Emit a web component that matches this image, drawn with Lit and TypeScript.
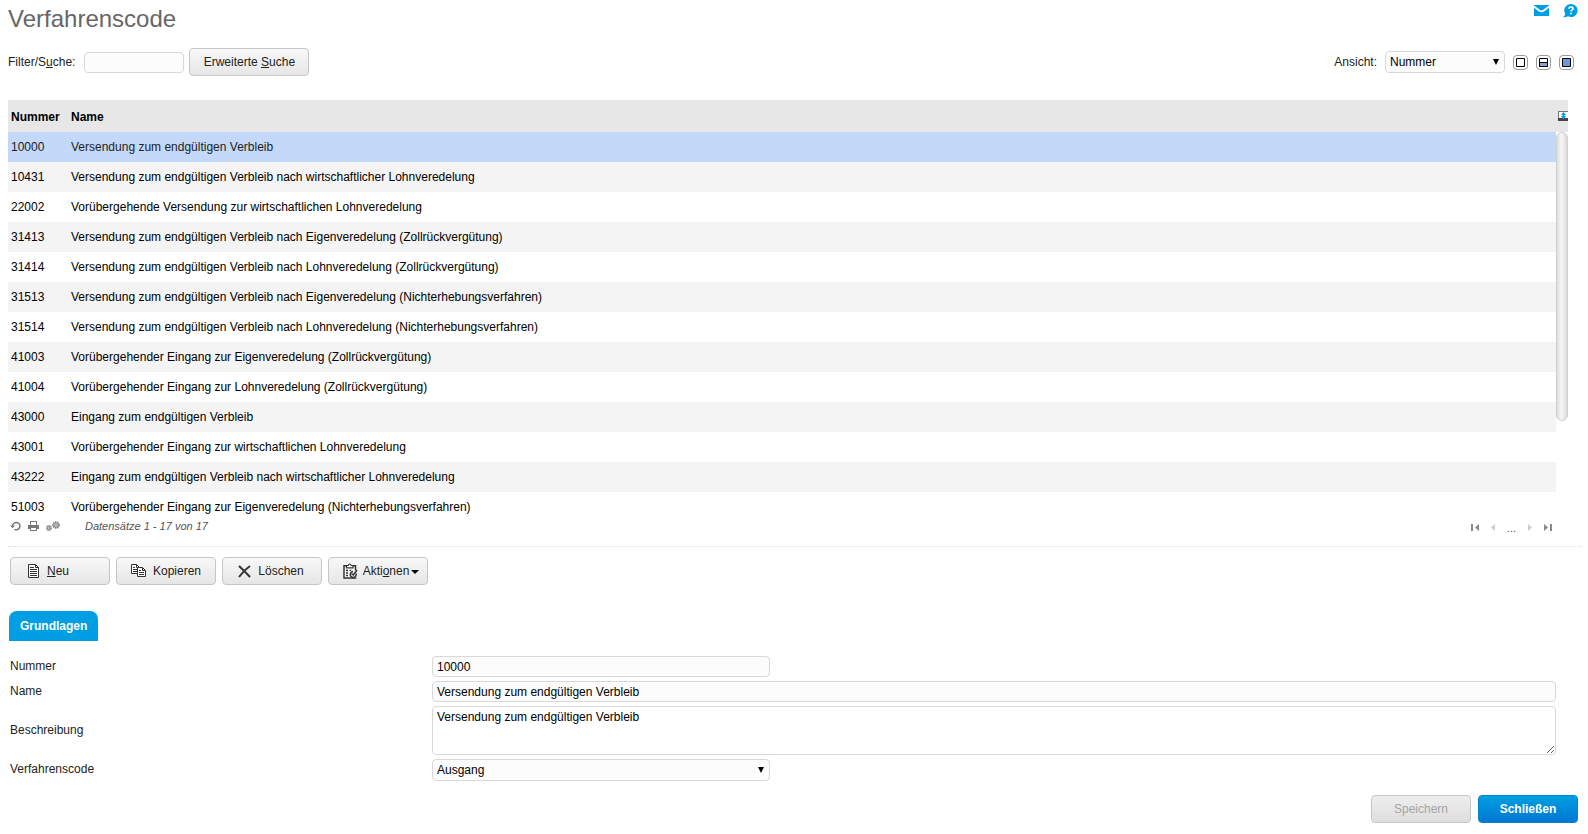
import { LitElement, html, css, svg } from "lit";
import { customElement, state } from "lit/decorators.js";
import { classMap } from "lit/directives/class-map.js";

interface Entry {
  nummer: string;
  name: string;
}

const ENTRIES: Entry[] = [
  { nummer: "10000", name: "Versendung zum endgültigen Verbleib" },
  { nummer: "10431", name: "Versendung zum endgültigen Verbleib nach wirtschaftlicher Lohnveredelung" },
  { nummer: "22002", name: "Vorübergehende Versendung zur wirtschaftlichen Lohnveredelung" },
  { nummer: "31413", name: "Versendung zum endgültigen Verbleib nach Eigenveredelung (Zollrückvergütung)" },
  { nummer: "31414", name: "Versendung zum endgültigen Verbleib nach Lohnveredelung (Zollrückvergütung)" },
  { nummer: "31513", name: "Versendung zum endgültigen Verbleib nach Eigenveredelung (Nichterhebungsverfahren)" },
  { nummer: "31514", name: "Versendung zum endgültigen Verbleib nach Lohnveredelung (Nichterhebungsverfahren)" },
  { nummer: "41003", name: "Vorübergehender Eingang zur Eigenveredelung (Zollrückvergütung)" },
  { nummer: "41004", name: "Vorübergehender Eingang zur Lohnveredelung (Zollrückvergütung)" },
  { nummer: "43000", name: "Eingang zum endgültigen Verbleib" },
  { nummer: "43001", name: "Vorübergehender Eingang zur wirtschaftlichen Lohnveredelung" },
  { nummer: "43222", name: "Eingang zum endgültigen Verbleib nach wirtschaftlicher Lohnveredelung" },
  { nummer: "51003", name: "Vorübergehender Eingang zur Eigenveredelung (Nichterhebungsverfahren)" },
];

const icon = (w: number, h: number, body: unknown) => html`<svg
  width=${w}
  height=${h}
  viewBox="0 0 ${w} ${h}"
  aria-hidden="true"
>${body}</svg>`;

const mailIcon = icon(15, 12, svg`<path fill="#009fe3" d="M0 1h15v11H0z"/><path fill="none" stroke="#fff" stroke-width="1.800" d="M0 2.500l5.500 4.200q2 1.300 4 0L15 2.500"/>`);
const helpIcon = icon(15, 14, svg`<path fill="#009fe3" d="M8.300 0a6.500 6.500 0 1 1-3.300 12.200Q3 13.500 0 13.300q2-1.300 2.200-3.500A6.500 6.500 0 0 1 8.300 0z"/><path fill="none" stroke="#fff" stroke-width="1.700" d="M6 4.800q0-1.800 2-1.800t2 1.600q0 1-1.200 1.600-.8.400-.8 1.400M8 8.700v1.600"/>`);
const viewListIcon = icon(9, 9, svg`<path fill="#fff" stroke="#000" d="M.5.5h8v8h-8z"/>`);
const viewSplitIcon = icon(9, 9, svg`<path fill="#fff" stroke="#000" d="M.5.5h8v8h-8z"/><path fill="#8ea2d2" stroke="#000" d="M.5 4.500h8v4h-8z"/>`);
const viewFormIcon = icon(9, 9, svg`<path fill="#6a9bd8" stroke="#000" d="M.5.5h8v8h-8z"/>`);
const columnsIcon = icon(10, 10, svg`<path fill="#fff" d="M0 0h10v10H0z"/><path fill="#777" d="M0 0h10v1H0zM0 0h1v10H0z"/><path fill="#444" d="M0 7h10v3H0z"/><path fill="#009fe3" d="M5.500 1L8 4H6.500v1H8L5.500 8.500 3 5h1.500V4H3z"/>`);
const refreshIcon = icon(11, 10, svg`<path fill="none" stroke="#777" stroke-width="1.500" d="M2.500 5a3.700 3.700 0 1 1 2 3.400"/><path fill="#777" d="M0 4.500h5L2.500 7.300z"/>`);
const printIcon = icon(11, 10, svg`<path fill="#777" d="M2 0h7v4H2zM0 4h11v4H0z"/><path fill="#fff" d="M3 1h5v3H3z"/><path fill="#777" d="M2 6h7v4H2z"/><path fill="#fff" d="M3 7h5v2H3z"/>`);
const gearsIcon = icon(14, 10, svg`<g fill="#bbb" stroke="#888"><circle cx="3" cy="7" r="2" stroke-width="2" stroke-dasharray="1.200 .4"/><circle cx="10" cy="4" r="2.700" stroke-width="2.200" stroke-dasharray="1.400 .5"/></g>`);
const firstIcon = icon(8, 8, svg`<path fill="#888" d="M0 0h2v7H0zM8 0v7L4 3.500z"/>`);
const lastIcon = icon(8, 8, svg`<path fill="#888" d="M6 0h2v7H6zM0 0v7l4-3.500z"/>`);
const prevIcon = icon(4, 8, svg`<path fill="#ccc" d="M4 0v7L0 3.500z"/>`);
const nextIcon = icon(4, 8, svg`<path fill="#ccc" d="M0 0v7l4-3.500z"/>`);
const newIcon = icon(12, 14, svg`<path fill="#fff" stroke="#333" d="M.5.5h7l3 3v10H.5z"/><path fill="none" stroke="#333" d="M7.500.5v3h3M2 3.500h4M2 5.500h7M2 7.500h7M2 9.500h7M2 11.500h7"/>`);
const copyIcon = icon(16, 14, svg`<path fill="#fff" stroke="#333" d="M.5.5h5l3 3v6h-8z"/><path fill="none" stroke="#333" d="M5.500.5v3h3M2 3.500h2M2 5.500h5M2 7.500h5"/><path fill="#fff" stroke="#333" d="M6.500 3.500h5l3 3v6h-8z"/><path fill="none" stroke="#333" d="M11.500 3.500v3h3M8 6.500h2M8 8.500h5M8 10.500h5"/>`);
const deleteIcon = icon(13, 13, svg`<path fill="none" stroke="#333" stroke-width="2" d="M1 1q5 4.500 11 11M12 1Q6 5 1 12"/>`);
const actionsIcon = icon(15, 16, svg`<path fill="#fff" stroke="#333" stroke-width="1.500" d="M1 2.800h11.500v12.200H1z"/><path fill="#fff" stroke="#333" stroke-width="1.200" d="M3.500 4.800V2.500h1.700q1.500-3 3 0H10v2.300z"/><path fill="none" stroke="#333" stroke-width="1.500" d="M3 7.500h2M3 10h2M3 12.500h2M6.500 7.500h2"/><circle cx="10.500" cy="11" r="4" fill="#f2f2f2"/><path fill="none" stroke="#333" stroke-width="1.500" d="M13 10.500a3 3 0 1 1-3-2M8.500 10.500l1.800 1.500 3.700-5"/>`);

@customElement("app-root")
export class AppRoot extends LitElement {
  @state() private selected = 0;

  static styles = css`
    :host {
      display: block;
      background: #fff;
      color: #222;
      font-family: "Liberation Sans", Arial, sans-serif;
      font-size: 12px;
      line-height: 16px;
    }
    *, *::before, *::after { box-sizing: border-box; }
    svg { display: block; flex: none; }
    button, input, select, textarea { font: inherit; color: #000; margin: 0; }
    button { padding: 0; border: 0; background: none; }

    .head { display: flex; justify-content: space-between; align-items: flex-start; padding: 4px 10px 0 8px; height: 48px; }
    h1 { margin: 0; font-size: 24px; line-height: 30px; font-weight: 400; color: #666; }
    .links { display: flex; gap: 14px; }

    .tools { display: flex; align-items: center; padding: 0 14px 0 8px; height: 28px; }
    .tools label { margin-right: 8px; }
    .tools .find { margin-right: 9px; }
    .search { width: 100px; }
    .tools .view { margin-left: auto; }
    .view-select { width: 120px; margin-right: 8px; }
    .modes { display: flex; gap: 8px; }
    .mode { width: 15px; height: 15px; display: grid; place-items: center; border: 1px solid #999; border-radius: 4px; background: #fff; }

    .field { height: 21px; padding: 0 4px; border: 1px solid #d8d8d8; border-radius: 4px; background: #fcfcfc; outline: 0; }
    .picker { position: relative; display: flex; }
    .picker select { appearance: none; width: 100%; height: 22px; }
    .picker::after { content: ""; position: absolute; right: 6px; top: 8px; border: solid transparent; border-width: 6px 3px 0; border-top-color: #000; pointer-events: none; }

    .btn { display: flex; align-items: center; justify-content: center; height: 28px; min-width: 100px; border: 1px solid #c6c6c6; border-radius: 4px; background: linear-gradient(#f8f8f8, #e6e6e6); color: #222; }
    .search-btn { width: 120px; margin-left: 5px; }

    .grid { display: grid; grid-template-columns: minmax(0, 1fr) 12px; margin: 24px 20px 0 8px; }
    .rows { height: 417px; overflow: hidden; }
    table { width: 100%; border-collapse: collapse; table-layout: fixed; }
    th, td { padding: 0 3px; text-align: left; color: #000; }
    th { height: 32px; padding-top: 2px; background: #e7e7e7; white-space: nowrap; }
    td { height: 30px; }
    .col-nummer { width: 60px; }
    tbody tr:nth-child(even) { background: #f4f4f4; }
    tbody tr.selected { background: #c4d9fa; }
    tbody tr.selected td { color: #222; }
    .corner { height: 32px; display: flex; justify-content: flex-end; align-items: center; background: #e7e7e7; }
    .thumb { height: 289px; border: 1px solid #d0d0d0; border-radius: 6px; background: linear-gradient(90deg, #ddd, #f5f5f5 40%, #f0f0f0 60%, #d8d8d8); }

    .status { display: flex; align-items: center; height: 18px; padding: 0 36px 0 10px; color: #555; }
    .status button { margin-right: 7px; }
    .status em { margin-left: 18px; font-size: 11px; }
    .pager { display: flex; align-items: center; gap: 12px; margin-left: auto; padding-top: 4px; font-size: 11px; }
    .status .pager button { margin: 0; }
    .rule { margin: 11px 6px 0 8px; border-top: 1px dotted #ddd; }

    .actions { display: flex; gap: 6px; padding: 10px 10px 0; }
    .actions .btn { width: 100px; gap: 6px; }
    .actions .create { justify-content: flex-start; padding-left: 17px; gap: 7px; }
    .actions .remove { gap: 7px; padding-right: 2px; }
    .actions .more { gap: 5px; padding-left: 6px; }
    .caret { display: inline-block; border: solid transparent; border-width: 4px 4px 0; border-top-color: #000; vertical-align: middle; margin-left: 2px; }

    .tabs { padding: 26px 9px 0; display: flex; }
    .tab { height: 30px; padding: 0 11px; border-radius: 8px 8px 0 0; background: #009fe3; color: #fff; font-weight: 700; }

    .form { display: grid; grid-template-columns: 422px minmax(0, 1fr); row-gap: 4px; align-items: center; padding: 15px 32px 0 10px; }
    .form label { padding-bottom: 2px; }
    .short { width: 338px; }
    .area { display: block; width: 100%; height: 49px; padding: 2px 4px; background: #fff; resize: vertical; }

    .foot { display: flex; justify-content: flex-end; gap: 7px; padding: 14px 10px 11px; }
    .btn:disabled { background: linear-gradient(#eee, #dedede); color: #a5a5a5; }
    .primary { border-color: #0084cf; background: linear-gradient(#009fe0, #0077d4); color: #fff; font-weight: 700; }
  `;

  render() {
    const current = ENTRIES[this.selected];
    return html`
      <header class="head">
        <h1>Verfahrenscode</h1>
        <nav class="links">
          <a href="#mail" aria-label="E-Mail">${mailIcon}</a>
          <a href="#help" aria-label="Hilfe">${helpIcon}</a>
        </nav>
      </header>

      <div class="tools">
        <label class="find" for="search">Filter/S<u>u</u>che:</label>
        <input id="search" class="field search" type="text" />
        <button class="btn search-btn"><span>Erweiterte <u>S</u>uche</span></button>
        <label class="view" for="view">Ansicht:</label>
        <div class="picker view-select">
          <select id="view" class="field"><option>Nummer</option></select>
        </div>
        <div class="modes">
          <button class="mode" aria-label="Liste">${viewListIcon}</button>
          <button class="mode" aria-label="Geteilt">${viewSplitIcon}</button>
          <button class="mode" aria-label="Formular">${viewFormIcon}</button>
        </div>
      </div>

      <div class="grid">
        <div class="rows">
          <table>
            <thead>
              <tr><th class="col-nummer">Nummer</th><th>Name</th></tr>
            </thead>
            <tbody>
              ${ENTRIES.map((entry, i) => html`
                <tr class=${classMap({ selected: i === this.selected })} @click=${() => (this.selected = i)}>
                  <td>${entry.nummer}</td>
                  <td>${entry.name}</td>
                </tr>`)}
            </tbody>
          </table>
        </div>
        <div>
          <div class="corner"><button aria-label="Spalten">${columnsIcon}</button></div>
          <div class="thumb"></div>
        </div>
      </div>

      <div class="status">
        <button aria-label="Aktualisieren">${refreshIcon}</button>
        <button aria-label="Drucken">${printIcon}</button>
        <button aria-label="Einstellungen">${gearsIcon}</button>
        <em>Datensätze 1 - 17 von 17</em>
        <div class="pager">
          <button aria-label="Erste Seite">${firstIcon}</button>
          <button aria-label="Vorherige Seite">${prevIcon}</button>
          <span>...</span>
          <button aria-label="Nächste Seite">${nextIcon}</button>
          <button aria-label="Letzte Seite">${lastIcon}</button>
        </div>
      </div>
      <div class="rule"></div>

      <div class="actions">
        <button class="btn create">${newIcon}<span><u>N</u>eu</span></button>
        <button class="btn">${copyIcon}<span>Kopieren</span></button>
        <button class="btn remove">${deleteIcon}<span>Löschen</span></button>
        <button class="btn more">${actionsIcon}<span>Akti<u>o</u>nen<i class="caret"></i></span></button>
      </div>

      <div class="tabs"><button class="tab">Grundlagen</button></div>

      <div class="form">
        <label for="nummer">Nummer</label>
        <input id="nummer" class="field short" type="text" .value=${current.nummer} />
        <label for="name">Name</label>
        <input id="name" class="field" type="text" .value=${current.name} />
        <label for="beschreibung">Beschreibung</label>
        <textarea id="beschreibung" class="field area" .value=${current.name}></textarea>
        <label for="code">Verfahrenscode</label>
        <div class="picker short">
          <select id="code" class="field"><option>Ausgang</option></select>
        </div>
      </div>

      <footer class="foot">
        <button class="btn" disabled>Speichern</button>
        <button class="btn primary">Schließen</button>
      </footer>
    `;
  }
}
